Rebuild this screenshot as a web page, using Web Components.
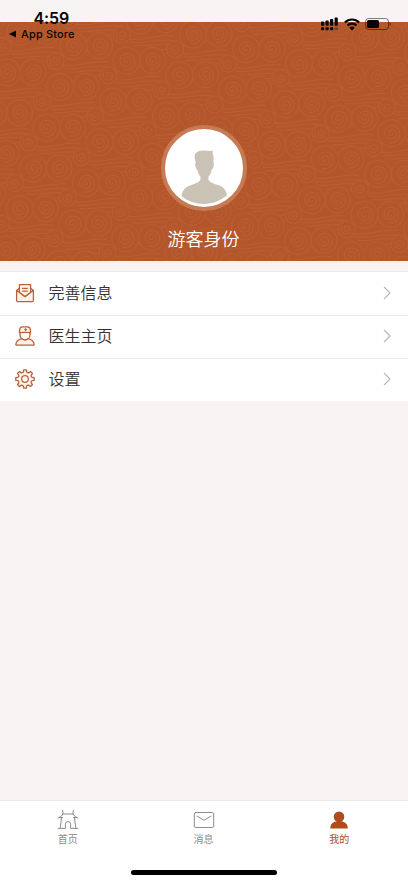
<!DOCTYPE html>
<html lang="zh-CN">
<head>
<meta charset="utf-8">
<meta name="viewport" content="width=device-width, initial-scale=1">
<title>我的</title>
<style>
    html, body {
        margin: 0;
        height: 100%;
        overflow: hidden;
        background: #f8f4f4;
        font-family: "Noto Sans CJK SC", sans-serif;
    }
</style>
</head>
<body>
<profile-page></profile-page>

<template id="status-bar">
    <style>
        :host {
            display: flex;
            justify-content: space-between;
            box-sizing: border-box;
            height: 44px;
            padding: 9px 17px 0 9px;
            color: #0b0603;
            font-family: Inter, sans-serif;
        }
        .time {
            padding-left: 24.5px;
            font-size: 16px;
            font-weight: 600;
            line-height: 18px;
            letter-spacing: -0.1px;
        }
        .back {
            display: flex;
            align-items: center;
            gap: 5px;
            font-size: 11px;
            font-weight: 500;
            line-height: 14px;
            letter-spacing: 0.15px;
        }
        .right {
            display: flex;
            gap: 5.5px;
            padding-top: 8px;
        }
        svg { display: block; }
    </style>
    <div>
        <div class="time">4:59</div>
        <div class="back">
            <svg width="7" height="8" viewBox="0 0 7 8"><path d="M0 4L7 .6v6.8z" fill="currentColor"/></svg>
            <span>App Store</span>
        </div>
    </div>
    <div class="right">
        <svg width="17" height="14" viewBox="0 0 17 14" fill="currentColor">
            <rect x="0" y="4.6" width="3.2" height="4.2" rx=".8"/>
            <rect x="4.5" y="3.4" width="3.2" height="5.4" rx=".8"/>
            <rect x="9" y="2" width="3.2" height="6.8" rx=".8"/>
            <rect x="13.6" y=".4" width="3.2" height="8.4" rx=".8"/>
            <rect x="0" y="10.200" width="3.2" height="3" rx=".8"/>
            <rect x="4.5" y="10.200" width="3.2" height="3" rx=".8"/>
            <rect x="9" y="10.200" width="3.2" height="3" rx=".8"/>
            <rect x="13.6" y="10.200" width="3.2" height="3" rx=".8" opacity=".3"/>
        </svg>
        <svg width="16" height="14" viewBox="0 0 16 14" fill="none" stroke="currentColor" stroke-width="2.1">
            <path d="M.9 5.400a10.200 10.200 0 0 1 14.200 0M3.500 8.500a6.400 6.400 0 0 1 9 0"/>
            <path d="M5.400 10.800a3.800 3.800 0 0 1 5.200 0L8 13.500z" fill="currentColor" stroke="none"/>
        </svg>
        <svg width="26" height="14" viewBox="0 0 26 14">
            <rect x=".5" y="1.500" width="23" height="11" rx="3" fill="none" stroke="currentColor" stroke-opacity=".5"/>
            <rect x="2" y="3" width="12" height="8" rx="1.500" fill="currentColor"/>
            <path d="M24.600 5.100q1.400.5 1.400 1.900t-1.400 1.900z" fill="currentColor" opacity=".5"/>
        </svg>
    </div>
</template>

<template id="user-banner">
    <style>
        :host {
            display: grid;
            height: 239px;
            background: #b3562a;
            overflow: hidden;
        }
        .clouds, .user { grid-area: 1 / 1; }
        .clouds {
            display: block;
            fill: none;
            stroke: #b85c31;
            stroke-width: 1.4;
            stroke-linecap: round;
        }
        .user {
            z-index: 1;
            display: flex;
            flex-direction: column;
            align-items: center;
            padding-top: 103px;
        }
        .avatar {
            width: 78px;
            height: 78px;
            border: 4px solid #c67b55;
            border-radius: 50%;
            background: #fff;
            overflow: hidden;
        }
        .name {
            margin: 14px 1px 0 0;
            color: #fff;
            font-size: 18px;
            line-height: 26px;
            font-weight: 350;
        }
    </style>
    <svg class="clouds" width="408" height="239" viewBox="0 22 408 239">
        <defs>
            <g id="wind"></g>
            <g id="cloud"></g>
        </defs>
    </svg>
    <div class="user">
        <div class="avatar">
            <svg width="78" height="78" viewBox="0 0 78 78">
                <path fill="#cac2b5" d="M29.600 28c-.2-3.500 2-5.500 5.200-6.100 4-.7 8-.3 11 0l2-.5-.2 3c1.300 2 1.100 6 .7 9.400.8.200.7 2.500.1 4.200-.3 1.300-.9 2.400-1.800 2.700-.5 3.100-1.500 5.200-3.100 6.800v3.500c2.200 3 6.200 3.900 10.900 5.500 4.500 1.600 6.600 4.800 7.700 9.800-7.200 5.700-14.200 8.600-23.200 8.600-8.700 0-16.300-2.600-22.500-8.200 1.300-5 3.500-8.200 8-9.900 4.900-1.800 8.800-2.700 11-5.700v-3.600c-1.700-1.700-2.500-4-3-6.700-1.500-.7-2.300-4.500-2.100-6.400l.6-.8c-.9-2.100-1.200-4-1.300-5.600z"/>
            </svg>
        </div>
        <div class="name"><slot></slot></div>
    </div>
</template>

<template id="menu-item">
    <style>
        :host {
            display: flex;
            align-items: center;
            box-sizing: border-box;
            height: 43.300px;
            padding: 0 17px 2px 15px;
            background: #fff;
            border-top: 1px solid #ece9e9;
        }
        .icon { display: block; width: 20px; height: 20px; }
        .label {
            flex: 1;
            margin: -2px 0 0 13.500px;
            color: #333;
            font-size: 16px;
            font-weight: 350;
            line-height: 24px;
        }
        .arrow { display: block; }
    </style>
    <svg class="icon" viewBox="0 0 20 20" fill="none" stroke="#b9633c" stroke-width="1.300" stroke-linejoin="round" stroke-linecap="round"></svg>
    <span class="label"><slot></slot></span>
    <svg class="arrow" width="8" height="14" viewBox="0 0 8 14" fill="none" stroke="#b8b8b8" stroke-width="1.200"><path d="M1 1l6 6-6 6"/></svg>
</template>

<template id="tab-item">
    <style>
        :host {
            display: flex;
            flex: 1;
            flex-direction: column;
            align-items: center;
            padding-top: 8px;
            color: #8c8c8c;
        }
        :host([active]) { color: #b04b1c; }
        svg { display: block; width: 22px; height: 22px; }
        span { font-size: 10px; line-height: 15px; }
    </style>
    <svg viewBox="0 0 22 22" fill="none" stroke="currentColor" stroke-width="1" stroke-linecap="round" stroke-linejoin="round"></svg>
    <span><slot></slot></span>
</template>

<template id="profile-page">
    <style>
        :host {
            display: grid;
            grid-template-rows: 22px auto auto 1fr 83px;
            height: 883px;
            background: #f8f4f4;
        }
        status-bar { position: absolute; top: 0; left: 0; width: 100%; z-index: 2; }
        user-banner { grid-row: 2; }
        .menu { grid-row: 3; margin-top: 10.400px; }
        .tabs {
            grid-row: 5;
            display: grid;
            grid-template-rows: 1fr 14px;
            box-sizing: border-box;
            border-top: 1px solid #ebe7e7;
            background: #fff;
        }
        nav { display: flex; margin-right: 1px; }
        .home { width: 146px; height: 5px; border-radius: 3px; background: #000; justify-self: center; margin-top: 1px; }
    </style>
    <status-bar></status-bar>
    <user-banner>游客身份</user-banner>
    <div class="menu">
        <menu-item icon="letter">完善信息</menu-item>
        <menu-item icon="doctor">医生主页</menu-item>
        <menu-item icon="gear">设置</menu-item>
    </div>
    <div class="tabs">
        <nav>
            <tab-item icon="gate">首页</tab-item>
            <tab-item icon="mail">消息</tab-item>
            <tab-item icon="person" active>我的</tab-item>
        </nav>
        <div class="home"></div>
    </div>
</template>

<script>
const icons = {
    letter: `
        <path d="M1.600 7.300L10 13.700l8.400-6.400v10.300q0 1-1 1H2.600q-1 0-1-1z" fill="#fdf0e4"/>
        <path d="M4.400 9.300V1.600h11.200v7.700L10 13.600z" fill="#fff8f0"/>
        <path d="M4.400 5.200L1.600 7.400M15.600 5.200l2.800 2.200M7.400 5.300h5.200M7.400 8.100h5.200"/>`,
    doctor: `
        <path d="M5 6.300v2.300c0 3 2.200 5.300 5 5.300s5-2.300 5-5.300V6.300" fill="#fff"/>
        <path d="M4.400 6.700l.3-3.500Q5 .8 7.500.8h5q2.500 0 2.800 2.400l.3 3.500Q10 5.900 4.400 6.700z" fill="#fdf0e4"/>
        <path d="M10.600 2.400v2.400M9.400 3.600h2.400" stroke-width=".9"/>
        <path d="M6.900 12.700c-3.600.8-5.700 2.800-6 5.600q-.1.900.8.900h16.600q.9 0 .8-.9c-.3-2.800-2.400-4.800-6-5.600-1.800 1.500-4.400 1.500-6.200 0z" fill="#fdf0e4"/>`,
    gear: `<path class="teeth" fill="#fdf4ea"/><circle cx="10" cy="10" r="3.300" fill="#fff"/>`,
    gate: `
        <path d="M5.700 1.300l.3 3.700h10l.3-3.700M6 5Q5.200 7.700 1.200 9M16 5q.8 2.700 4.800 4M2.600 8.600h3M16.400 8.600h3M4.500 8.800L3.200 19.300M17.500 8.800l1.300 10.500M1.200 19.400h7.200v-4.200a2.600 2.600 0 0 1 5.200 0v4.200h7.200"/>`,
    mail: `<rect x="1.300" y="3.500" width="19.400" height="15" rx="1.500"/><path d="M4.200 7.200l6.800 4.100 6.800-4.100"/>`,
    person: `<g fill="currentColor" stroke="none"><circle cx="11" cy="7.700" r="5.300"/><path d="M2.300 19.400c0-4 2.200-6.200 6-7.100h5.400c3.800.9 6 3.100 6 7.100z"/></g>`
};

// eight teeth around a 20x20 box
function gearPath() {
    const points = [];
    for (let i = 0; i < 8; i++) {
        const mid = i * 45 - 90;
        for (const [offset, r] of [[-17, 6.9], [-12, 7.5], [-8.5, 9.3], [8.5, 9.3], [12, 7.5], [17, 6.9]]) {
            const a = (mid + offset) * Math.PI / 180;
            points.push((10 + r * Math.cos(a)).toFixed(2) + ' ' + (10 + r * Math.sin(a)).toFixed(2));
        }
    }
    return 'M' + points.join('L') + 'z';
}

function spiral(cx, cy, radius, turns) {
    let d = '';
    const steps = Math.round(turns * 24);
    for (let i = 0; i <= steps; i++) {
        const r = 1 + (radius - 1) * i / steps;
        const a = i / 24 * Math.PI * 2;
        d += (i ? 'L' : 'M') + (cx + r * Math.cos(a)).toFixed(1) + ' ' + (cy + r * Math.sin(a)).toFixed(1);
    }
    return `<path d="${d}"/>`;
}

class BaseElement extends HTMLElement {
    constructor() {
        super();
        this.attachShadow({ mode: 'open' });
        const template = document.getElementById(this.localName);
        this.shadowRoot.appendChild(template.content.cloneNode(true));
    }
}

class StatusBar extends BaseElement {}

class UserBanner extends BaseElement {
    constructor() {
        super();
        const svg = this.shadowRoot.querySelector('.clouds');
        this.shadowRoot.querySelector('#wind').innerHTML =
            `<path d="M3 -22c14 3 26-5 44-3M4 -18.500c15 2 28-5 47-1M7 -15c16 1 24-4 42 0M34 -11c8 0 12-4 20-3"/>`;
        // two big curls with a small one above them
        this.shadowRoot.querySelector('#cloud').innerHTML =
            '<circle cx="-4.500" cy="-26" r="8.500" fill="#b3562a"/>' + spiral(-4.5, -26, 5.5, 1.6) +
            '<circle cx="26" cy="-.5" r="13" fill="#b3562a"/>' + spiral(26, -0.5, 9, 2.3) +
            '<circle r="13.500" fill="#b3562a"/>' + spiral(0, 0, 9.5, 2.3);
        let winds = '';
        let clouds = '';
        for (let row = -3; row < 8; row++) {
            for (let col = -4; col < 11; col++) {
                const x = 60 + col * 53 - row * 13.5;
                const y = 87 + col * 14.5 + row * 40.7;
                if (x > -60 && x < 440 && y > -10 && y < 300) {
                    winds += `<use href="#wind" x="${x}" y="${y}"/>`;
                    clouds += `<use href="#cloud" x="${x}" y="${y}"/>`;
                }
            }
        }
        svg.insertAdjacentHTML('beforeend', winds + clouds);
    }
}

class MenuItem extends BaseElement {
    connectedCallback() {
        this.shadowRoot.querySelector('.icon').innerHTML = icons[this.getAttribute('icon')];
        const teeth = this.shadowRoot.querySelector('.teeth');
        if (teeth) {
            teeth.setAttribute('d', gearPath());
        }
    }
}

class TabItem extends BaseElement {
    connectedCallback() {
        this.shadowRoot.querySelector('svg').innerHTML = icons[this.getAttribute('icon')];
    }
}

class ProfilePage extends BaseElement {}

customElements.define('status-bar', StatusBar);
customElements.define('user-banner', UserBanner);
customElements.define('menu-item', MenuItem);
customElements.define('tab-item', TabItem);
customElements.define('profile-page', ProfilePage);
</script>
</body>
</html>
